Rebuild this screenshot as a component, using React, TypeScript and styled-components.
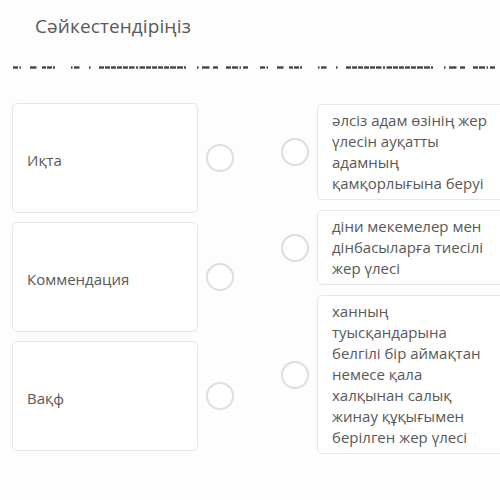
import React from "react";
import styled, { createGlobalStyle } from "styled-components";

const Global = createGlobalStyle`
  html, body { margin: 0; padding: 0; background: #fdfdfd; }
  body { font-family: "Open Sans", "Noto Sans", sans-serif; color: #585858; }
`;

const Page = styled.div`
  width: 500px;
  height: 500px;
  overflow: hidden;
  display: flex;
  flex-direction: column;
`;

const Title = styled.h1`
  margin: 0;
  padding: 12px 0 0 35px;
  font-size: 19px;
  font-weight: 400;
  line-height: 28px;
  color: #5a5a5a;
  letter-spacing: 0.1px;
`;

const Rule = styled.svg`
  display: block;
  margin-top: 26px;
`;

const Board = styled.div`
  display: flex;
  align-items: flex-start;
  gap: 47px;
  padding: 34px 0 0 12px;
`;

const Column = styled.div<{ $gap: number; $offset: number }>`
  display: flex;
  flex-direction: column;
  gap: ${(p) => p.$gap}px;
  margin-top: ${(p) => p.$offset}px;
`;

const Row = styled.div`
  display: flex;
  align-items: center;
  gap: 8px;
`;

const Card = styled.div`
  box-sizing: border-box;
  border: 1px solid #e6e6e6;
  border-radius: 5px;
  background: #fff;
  font-size: 15px;
  color: #585858;
`;

const TermCard = styled(Card)`
  width: 186px;
  height: 110px;
  display: flex;
  align-items: center;
  padding: 3px 0 0 14px;
`;

const DefCard = styled(Card)`
  width: 195px;
  flex-shrink: 0;
  padding: 5px 20px 5px 14px;
  line-height: 21px;
`;

const Radio = styled.span`
  box-sizing: border-box;
  flex-shrink: 0;
  width: 28px;
  height: 28px;
  border-radius: 50%;
  border: 2px solid #dedede;
  background: #fff;
`;

const terms = ["Иқта", "Коммендация", "Вақф"];
const defs = [
  "әлсіз адам өзінің жер үлесін ауқатты адамның қамқорлығына беруі",
  "діни мекемелер мен дінбасыларға тиесілі жер үлесі",
  "ханның туысқандарына белгілі бір аймақтан немесе қала халқынан салық жинау құқығымен берілген жер үлесі",
];

const segs: [number, number][] = [
  [13, 18], [19.5, 21], [30, 36.5], [42, 46], [47, 52], [53, 55], [71, 72.5], [74, 79.5],
  [89, 90.5], [99, 104], [105, 110], [111, 116], [117, 122], [123, 128], [129, 134.5], [136, 138],
  [139.5, 145], [146, 151], [152, 157], [158, 163], [164, 169], [170, 176], [177, 183], [184, 186],
  [197, 198.5], [202, 209.5], [213, 218], [226, 231], [232, 238], [239.5, 241], [243, 248],
];

export default function App() {
  return (
    <Page>
      <Global />
      <Title>Сәйкестендіріңіз</Title>
      <Rule width="500" height="3" viewBox="0 0 500 3">
        {[0, 247].map((off) =>
          segs.map(([a, b], i) => (
            <rect key={`${off}-${i}`} x={a + off} y={0.3} width={b - a} height={2.4} fill="#444" />
          ))
        )}
      </Rule>
      <Board>
        <Column $gap={9} $offset={0}>
          {terms.map((t) => (
            <Row key={t}>
              <TermCard>{t}</TermCard>
              <Radio />
            </Row>
          ))}
        </Column>
        <Column $gap={10} $offset={1}>
          {defs.map((d) => (
            <Row key={d}>
              <Radio />
              <DefCard>{d}</DefCard>
            </Row>
          ))}
        </Column>
      </Board>
    </Page>
  );
}
